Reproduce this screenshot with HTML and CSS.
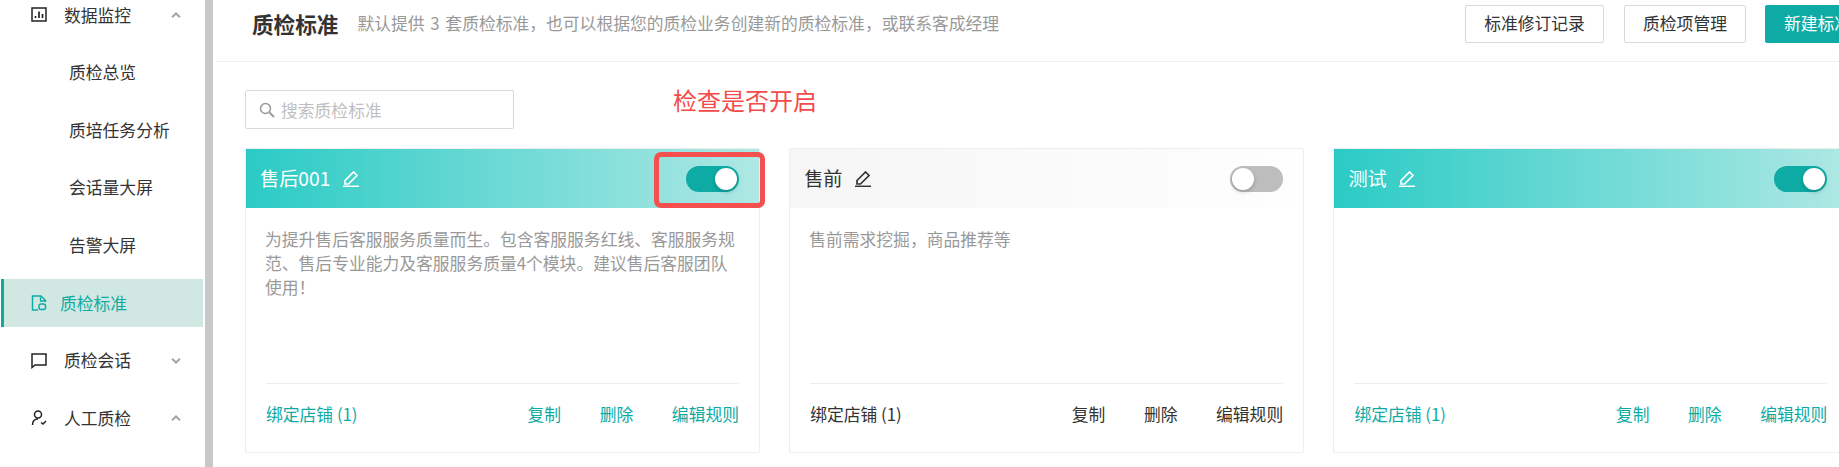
FILE: index.html
```html
<!DOCTYPE html>
<html lang="zh-CN">
<head>
<meta charset="utf-8">
<title>质检标准</title>
<link rel="stylesheet" href="styles.css">
</head>
<body>
<div class="app">
  <aside class="sidebar">
    <nav class="menu">
      <div class="item">
        <svg class="icon" viewBox="0 0 16 16"><rect x="1" y="1" width="14" height="13" fill="none" stroke="#222" stroke-width="1.500"/><path d="M4.500 11V9M8 11V4.500M11.500 11V7" fill="none" stroke="#222" stroke-width="1.700"/></svg>
        <span class="label">数据监控</span>
        <svg class="chev" viewBox="0 0 10 6"><path d="M1 5.200l4-3.700 4 3.700" fill="none" stroke="#a6a6a6" stroke-width="2.100"/></svg>
      </div>
      <div class="item sub">质检总览</div>
      <div class="item sub">质培任务分析</div>
      <div class="item sub">会话量大屏</div>
      <div class="item sub">告警大屏</div>
      <div class="item active">
        <svg class="icon" viewBox="0 0 16 16"><path d="M7 15H1.500V1H10l4.500 4.500V7" fill="none" stroke="#0eaba5" stroke-width="1.500"/><rect x="8" y="9" width="6.500" height="5.500" rx="2" fill="none" stroke="#0eaba5" stroke-width="1.500"/><path d="M9.500 1.500V6H14" fill="none" stroke="#0eaba5" stroke-width="1.300"/></svg>
        <span class="label">质检标准</span>
      </div>
      <div class="item">
        <svg class="icon" viewBox="0 0 16 16"><path d="M1 1h14v11H4l-3 2.500z" fill="none" stroke="#222" stroke-width="1.500"/></svg>
        <span class="label">质检会话</span>
        <svg class="chev" viewBox="0 0 10 6"><path d="M1 .8l4 3.700L9 .8" fill="none" stroke="#a6a6a6" stroke-width="2.100"/></svg>
      </div>
      <div class="item">
        <svg class="icon" viewBox="0 0 16 16"><circle cx="7" cy="4.500" r="3.500" fill="none" stroke="#222" stroke-width="1.500"/><path d="M1.500 15c0-3.500 2-6 5.500-6" fill="none" stroke="#222" stroke-width="1.500"/><path d="M10 12.500l2 1.500 3-3" fill="none" stroke="#222" stroke-width="1.500"/></svg>
        <span class="label">人工质检</span>
        <svg class="chev" viewBox="0 0 10 6"><path d="M1 5.200l4-3.700 4 3.700" fill="none" stroke="#a6a6a6" stroke-width="2.100"/></svg>
      </div>
    </nav>
  </aside>
  <div class="scrollbar"></div>
  <main class="main">
    <header class="topbar">
      <h1 class="title">质检标准</h1>
      <p class="desc">默认提供 3 套质检标准，也可以根据您的质检业务创建新的质检标准，或联系客成经理</p>
      <div class="actions">
        <button class="btn btn-a">标准修订记录</button>
        <button class="btn btn-b">质检项管理</button>
        <button class="btn primary">新建标准</button>
      </div>
    </header>
    <section class="content">
      <div class="tools">
        <div class="search">
          <svg class="search-icon" viewBox="0 0 16 16"><circle cx="6.500" cy="6.500" r="5" fill="none" stroke="#999" stroke-width="1.500"/><path d="M10.500 10.500l4.500 4.500" stroke="#999" stroke-width="1.800"/></svg>
          <span>搜索质检标准</span>
        </div>
        <div class="note">检查是否开启</div>
      </div>
      <div class="cards">
        <article class="card on">
          <div class="card-head">
            <span class="card-title">售后001</span>
            <svg class="pen" viewBox="0 0 16 16"><path d="M2 13V9.500L10.500 1 14 4.500 5.500 13z" fill="none" stroke="#fff" stroke-width="1.700"/><path d="M0 15.300h16" stroke="#fff" stroke-width="1.500"/></svg>
            <span class="toggle"><i class="knob"></i></span>
            <span class="mark"></span>
          </div>
          <p class="card-body">为提升售后客服服务质量而生。包含客服服务红线、客服服务规范、售后专业能力及客服服务质量4个模块。建议售后客服团队使用！</p>
          <div class="card-foot"><span class="bind">绑定店铺 (1)</span><span class="ops"><span>复制</span><span>删除</span><span>编辑规则</span></span></div>
        </article>
        <article class="card off">
          <div class="card-head">
            <span class="card-title">售前</span>
            <svg class="pen" viewBox="0 0 16 16"><path d="M2 13V9.500L10.500 1 14 4.500 5.500 13z" fill="none" stroke="#333" stroke-width="1.700"/><path d="M0 15.300h16" stroke="#333" stroke-width="1.500"/></svg>
            <span class="toggle"><i class="knob"></i></span>
          </div>
          <p class="card-body">售前需求挖掘，商品推荐等</p>
          <div class="card-foot"><span class="bind">绑定店铺 (1)</span><span class="ops"><span>复制</span><span>删除</span><span>编辑规则</span></span></div>
        </article>
        <article class="card on">
          <div class="card-head">
            <span class="card-title">测试</span>
            <svg class="pen" viewBox="0 0 16 16"><path d="M2 13V9.500L10.500 1 14 4.500 5.500 13z" fill="none" stroke="#fff" stroke-width="1.700"/><path d="M0 15.300h16" stroke="#fff" stroke-width="1.500"/></svg>
            <span class="toggle"><i class="knob"></i></span>
          </div>
          <p class="card-body"></p>
          <div class="card-foot"><span class="bind">绑定店铺 (1)</span><span class="ops"><span>复制</span><span>删除</span><span>编辑规则</span></span></div>
        </article>
      </div>
    </section>
  </main>
</div>
</body>
</html>
```
FILE: styles.css
```css
* { box-sizing: border-box; }
html, body { margin: 0; height: 100%; overflow: hidden; background: #fff; }
body { font-family: "Noto Sans CJK SC", "Noto Sans", sans-serif; font-size: 16.8px; color: #333; }
.app { display: flex; width: 1839px; height: 467px; overflow: hidden; }

.sidebar { flex: none; width: 205px; padding-left: 1px; }
.menu { display: flex; flex-direction: column; gap: 9.6px; margin-top: -9px; }
.item { display: flex; align-items: center; width: 202px; height: 48px; padding-left: 30px; color: #333; line-height: 1; }
.icon { flex: none; width: 16px; height: 16px; }
.label { margin-left: 17px; }
.chev { flex: none; width: 10px; height: 6px; margin-left: auto; margin-right: 22px; }
.item.sub { padding-left: 68px; }
.item.active { background: #d1e8e2; border-left: 3px solid #0eaba5; padding-left: 27px; color: #0eaba5; }
.item.active .label { margin-left: 13px; }

.scrollbar { flex: none; width: 8px; background: #c8c8c8; }

.main { flex: none; width: 1623px; margin-left: 3px; overflow: hidden; }
.topbar { display: flex; align-items: center; height: 62px; padding: 0 0 14px 36px; border-bottom: 1px solid #eee; white-space: nowrap; }
.title { margin: 0; font-size: 21.6px; font-weight: 700; color: #333; line-height: 1; }
.desc { margin: 0 0 0 19px; color: #999; line-height: 1; word-spacing: 2px; }
.actions { display: flex; margin-left: auto; margin-right: -31px; flex: none; }
.btn { height: 38px; padding: 0 18px; border: 1px solid #d9d9d9; border-radius: 2px; background: #fff; color: #333; font: inherit; line-height: 1; white-space: nowrap; }
.btn-a { width: 139px; margin-right: 20px; }
.btn-b { width: 122px; margin-right: 19px; }
.btn.primary { width: 105px; background: #0eaba5; border-color: #0eaba5; color: #fff; }

.content { padding: 28px 0 0 29px; }
.tools { display: flex; align-items: flex-start; height: 39px; margin-bottom: 19px; }
.search { display: flex; align-items: center; width: 269px; height: 39px; padding-left: 13px; border: 1px solid #d9d9d9; border-radius: 2px; color: #bfbfbf; }
.search-icon { width: 16px; height: 16px; margin-right: 6px; flex: none; }
.note { margin: -7px 0 0 159px; font-size: 24px; line-height: 34px; color: #f44b4b; }

.cards { display: flex; gap: 29.2px; }
.card { position: relative; display: flex; flex-direction: column; flex: none; width: 515px; height: 305px; border: 1px solid #eee; border-radius: 2px; }
.card-head { position: relative; display: flex; align-items: center; height: 59px; padding: 0 20px 0 14px; }
.on .card-head { background: linear-gradient(to right, #2bcbc5, #aee8e4); color: #fff; }
.off .card-head { background: linear-gradient(to right, #f6f6f6, #fefefe); color: #333; }
.card-title { font-size: 19.2px; line-height: 1; }
.pen { flex: none; width: 16px; height: 16px; margin-left: 12.5px; }
.toggle { display: flex; align-items: center; width: 53px; height: 26px; margin-left: auto; padding: 0 2px; border-radius: 13px; }
.on .toggle { justify-content: flex-end; background: #0eaba5; }
.off .toggle { justify-content: flex-start; background: #bdbdbd; }
.knob { display: block; width: 22px; height: 22px; border-radius: 50%; background: #fff; box-shadow: 0 2px 4px rgba(0,0,0,.2); }
.mark { position: absolute; top: 3px; right: -6px; width: 111px; height: 56px; border: 5px solid #f55050; border-radius: 7px; }
.card-body { flex: 1; margin: 0; padding: 19px 19px 0; color: #999; line-height: 24px; }
.card-foot { display: flex; align-items: center; justify-content: space-between; height: 62px; margin: 0 20px 7px 20px; border-top: 1px solid #eee; line-height: 1; }
.on .card-foot { color: #0eaba5; }
.ops { display: flex; gap: 38.6px; }
```
